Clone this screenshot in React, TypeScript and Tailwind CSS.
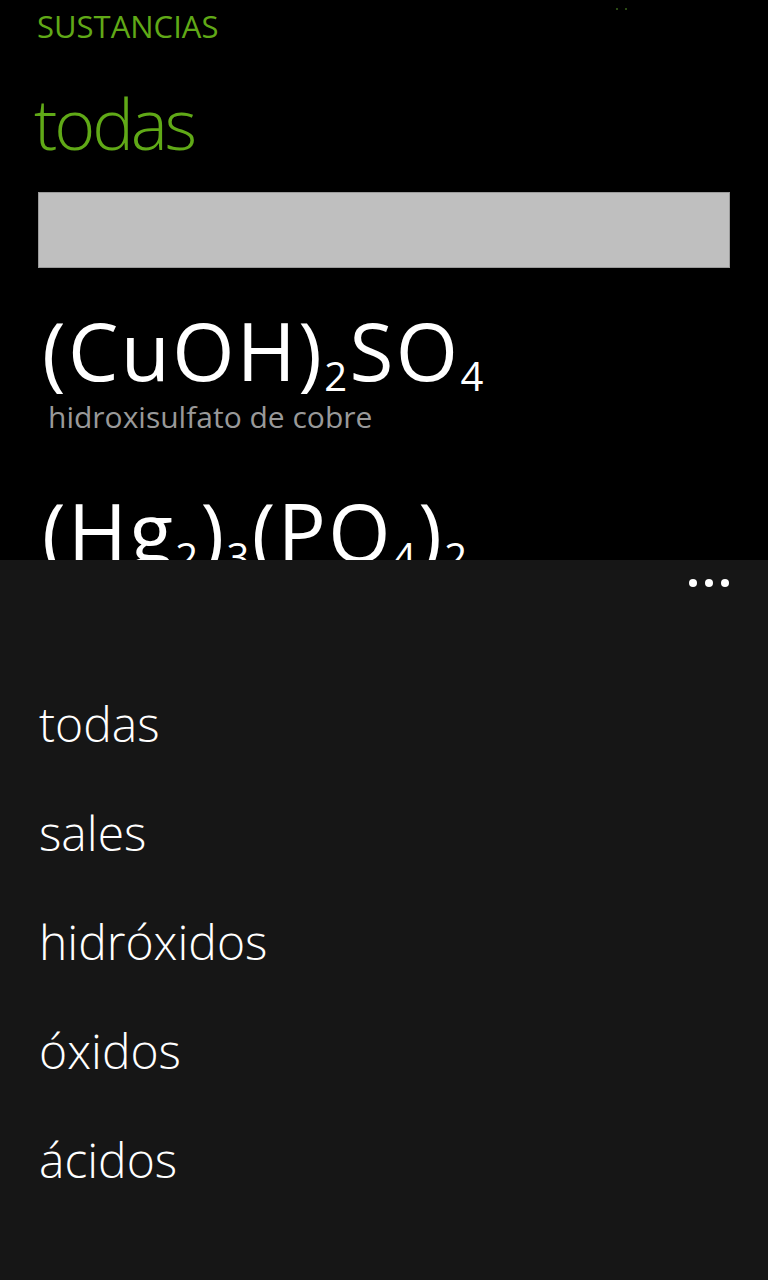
type Part = { t: string; sub?: boolean };

const formulas: { id: string; parts: Part[]; name?: string }[] = [
  {
    id: 'cuoh',
    parts: [{ t: '(CuOH)' }, { t: '2', sub: true }, { t: 'SO' }, { t: '4', sub: true }],
    name: 'hidroxisulfato de cobre',
  },
  {
    id: 'hg',
    parts: [
      { t: '(Hg' },
      { t: '2', sub: true },
      { t: ')' },
      { t: '3', sub: true },
      { t: '(PO' },
      { t: '4', sub: true },
      { t: ')' },
      { t: '2', sub: true },
    ],
  },
];

const menuItems = ['todas', 'sales', 'hidróxidos', 'óxidos', 'ácidos'];

export default function App() {
  return (
    <div className="w-[768px] h-[1280px] bg-black overflow-hidden font-['Open_Sans',sans-serif]">
      {/* page content, covered by the expanded app bar below */}
      <div className="relative h-[560px] overflow-hidden">
        <div className="absolute top-[8px] left-[616px] flex gap-[7px]">
          <span className="w-[2px] h-[2px] bg-[#2a4a14]" />
          <span className="w-[2px] h-[2px] bg-[#2a4a14]" />
        </div>

        <div className="pt-[6px] pl-[37px] text-[31px] leading-[40px] text-[#60a917]">SUSTANCIAS</div>
        <div className="mt-[37px] pl-[34px] text-[70px] leading-[80px] font-light tracking-[-0.045em] text-[#60a917]">
          todas
        </div>

        <div className="mt-[29px] mx-[38px] h-[76px] bg-[#bfbfbf] border border-[#9a9a9a]" />

        <ul className="mt-[40px]">
          {formulas.map((f) => (
            <li key={f.id} className="mb-[55px]">
              <div className="pl-[42px] text-[80px] leading-[84px] tracking-[0.03em] text-white whitespace-nowrap">
                {f.parts.map((p, i) =>
                  p.sub ? (
                    <span key={i} className="text-[40px] leading-[30px] align-[-10px]">
                      {p.t}
                    </span>
                  ) : (
                    <span key={i}>{p.t}</span>
                  ),
                )}
              </div>
              {f.name && (
                <div className="mt-[8px] pl-[48px] text-[30px] leading-[34px] text-[#999999]">{f.name}</div>
              )}
            </li>
          ))}
        </ul>
      </div>

      {/* expanded app bar */}
      <div className="h-[720px] bg-[#161616]">
        <div className="flex justify-end gap-[8px] pt-[19px] pr-[39px]">
          <span className="w-[8px] h-[8px] rounded-full bg-white" />
          <span className="w-[8px] h-[8px] rounded-full bg-white" />
          <span className="w-[8px] h-[8px] rounded-full bg-white" />
        </div>
        <ul className="mt-[82px] pl-[39px]">
          {menuItems.map((item) => (
            <li key={item} className="text-[48px] leading-[109px] font-light text-white">
              {item}
            </li>
          ))}
        </ul>
      </div>
    </div>
  );
}
